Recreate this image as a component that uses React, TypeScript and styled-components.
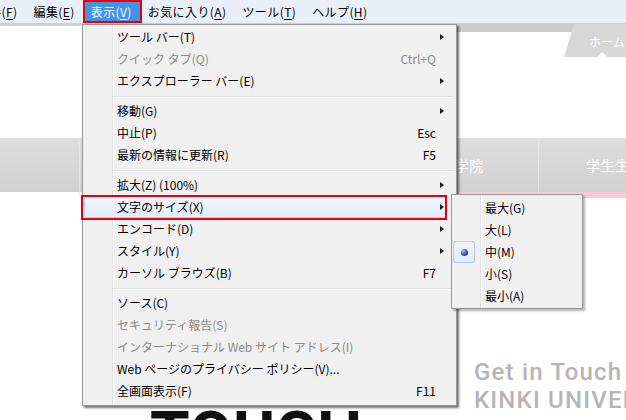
import React from 'react'
import styled, { createGlobalStyle, css } from 'styled-components'

type MenuEntry =
  | { label: string; shortcut?: string; sub?: boolean; disabled?: boolean; selected?: boolean }
  | 'sep'

const viewMenu: MenuEntry[] = [
  { label: 'ツール バー(T)', sub: true },
  { label: 'クイック タブ(Q)', shortcut: 'Ctrl+Q', disabled: true },
  { label: 'エクスプローラー バー(E)', sub: true },
  'sep',
  { label: '移動(G)', sub: true },
  { label: '中止(P)', shortcut: 'Esc' },
  { label: '最新の情報に更新(R)', shortcut: 'F5' },
  'sep',
  { label: '拡大(Z) (100%)', sub: true },
  { label: '文字のサイズ(X)', sub: true, selected: true },
  { label: 'エンコード(D)', sub: true },
  { label: 'スタイル(Y)', sub: true },
  { label: 'カーソル ブラウズ(B)', shortcut: 'F7' },
  'sep',
  { label: 'ソース(C)' },
  { label: 'セキュリティ報告(S)', disabled: true },
  { label: 'インターナショナル Web サイト アドレス(I)', disabled: true },
  { label: 'Web ページのプライバシー ポリシー(V)...' },
  { label: '全画面表示(F)', shortcut: 'F11' },
]

const sizes = ['最大(G)', '大(L)', '中(M)', '小(S)', '最小(A)']

const navItems = [
  { label: '入試情報' },
  { label: '学部' },
  { label: '大学院', accent: true },
  { label: '学生生活', accent: true },
]

const GlobalStyle = createGlobalStyle`
  html, body {
    margin: 0;
    padding: 0;
    background: #fff;
    overflow: hidden;
  }
  body {
    font-family: "Noto Sans CJK JP", "Noto Sans", sans-serif;
    font-size: 12px;
    color: #000;
  }
`

const Screen = styled.div`
  position: relative;
  width: 626px;
  height: 420px;
  overflow: hidden;
  background: #fff;
`

const MenuBar = styled.div`
  display: flex;
  height: 23px;
  background: #e9eff8;
  border-bottom: 1px solid #c9cfd8;
  white-space: nowrap;
`

const BarItem = styled.div<{ $active?: boolean }>`
  position: relative;
  padding: 0 8px;
  line-height: 23px;
  letter-spacing: 0.4px;
  color: ${p => (p.$active ? '#fff' : '#000')};
  background: ${p => (p.$active ? '#4393e4' : 'transparent')};

  &:first-child {
    margin-left: -56px;
  }

  u {
    text-decoration: underline;
    text-underline-offset: 2px;
  }

  ${p =>
    p.$active &&
    css`
      &::after {
        content: '';
        position: absolute;
        left: 0;
        right: -2px;
        top: 0;
        bottom: 0;
        border: 2.5px solid #e5000f;
      }
    `}
`

const HeaderRow = styled.div`
  display: flex;
  align-items: flex-start;
  height: 114px;
  margin-right: -18px;
`

const HeaderLine = styled.div`
  flex: 1;
  border-top: 2px solid #d3d3d3;
`

const HeaderStrip = styled.div`
  flex: 0 0 150px;
  height: 8px;
  background: #cbcbcb;
`

const HomeTab = styled.div`
  position: relative;
  flex: 0 0 80px;
  height: 33px;
  margin-left: -10px;
  padding: 2px 0 0 25px;
  box-sizing: border-box;
  display: flex;
  align-items: center;
  background: #d7d7d7;
  clip-path: polygon(10px 0, 100% 0, 100% 100%, 0 100%);
  color: #fff;
  font-size: 12px;

  &::after {
    content: '';
    position: absolute;
    left: 33px;
    bottom: 0;
    border-left: 5px solid transparent;
    border-right: 5px solid transparent;
    border-bottom: 5px solid #fff;
  }
`

const Nav = styled.nav`
  display: flex;
  align-items: flex-start;
  padding-left: 79px;
  background: linear-gradient(#dddddd, #d1d1d1) top left / 100% 54px no-repeat;
`

const NavItem = styled.div<{ $accent?: boolean }>`
  flex: 0 0 152px;
  height: 54px;
  display: flex;
  align-items: center;
  justify-content: center;
  border-left: 1px solid #e6e6e6;
  border-bottom: 6px solid ${p => (p.$accent ? '#f3cad5' : 'transparent')};
  color: #fff;
  font-size: 14px;
  letter-spacing: 0.5px;
`

const ContentRow = styled.div`
  display: flex;
`

const BigHeading = styled.div`
  flex: 0 0 474px;
  padding: 206px 0 0 150px;
  box-sizing: border-box;
  font-family: Roboto, "Liberation Sans", sans-serif;
  font-weight: 700;
  font-size: 64px;
  line-height: 64px;
  color: #111;
`

const Contact = styled.div`
  padding-top: 160px;
  font-family: Roboto, "Liberation Sans", sans-serif;
  font-weight: 500;
  font-size: 24px;
  line-height: 28px;
  letter-spacing: 1.2px;
  color: #b5b5b5;
  white-space: nowrap;
`

const panel = css`
  position: absolute;
  box-sizing: content-box;
  border: 1px solid #979797;
`

const Dropdown = styled.div`
  ${panel}
  left: 82px;
  top: 24px;
  width: 373px;
  padding: 1px 0 3px;
  background:
    linear-gradient(to right, transparent 29px, #e2e3e3 29px, #e2e3e3 30px, #fff 30px, #fff 31px, transparent 31px),
    #f0f0f0;
  box-shadow: 2px 2px 2px rgba(0, 0, 0, 0.55);
`

const Row = styled.div<{ $disabled?: boolean; $selected?: boolean }>`
  position: relative;
  display: grid;
  grid-template-columns: 1fr auto 20px;
  align-items: center;
  height: 22px;
  padding-left: 34px;
  line-height: 22px;
  white-space: nowrap;
  color: ${p => (p.$disabled ? '#8a8a8a' : '#000')};

  & > span {
    position: relative;
  }

  ${p =>
    p.$selected &&
    css`
      &::before {
        content: '';
        position: absolute;
        left: 1px;
        right: 10px;
        top: 0;
        bottom: 0;
        border: 1px solid #b9d3f1;
        border-radius: 2px;
        background: linear-gradient(#f2f7fd, #e2ebf7);
      }
      &::after {
        content: '';
        position: absolute;
        left: -2px;
        right: 9px;
        top: -1px;
        bottom: -2px;
        border: 2.5px solid #e5000f;
      }
    `}
`

const Shortcut = styled.span`
  text-align: right;
`

const Arrow = styled.span`
  justify-self: start;
  margin-left: 4px;
  width: 0;
  height: 0;
  border-left: 4px solid #1c1c1c;
  border-top: 3.5px solid transparent;
  border-bottom: 3.5px solid transparent;
`

const Separator = styled.div`
  height: 8px;
  box-sizing: border-box;
  padding-top: 4px;
  margin-left: 30px;
  margin-right: 2px;

  &::after {
    content: '';
    display: block;
    height: 1px;
    background: #e0e0e0;
    border-bottom: 1px solid #fff;
  }
`

const SubMenu = styled.div`
  ${panel}
  left: 451px;
  top: 194px;
  width: 130px;
  padding: 2px 0 1px;
  background:
    linear-gradient(to right, transparent 28px, #e2e3e3 28px, #e2e3e3 29px, #fff 29px, #fff 30px, transparent 30px),
    #f0f0f0;
  box-shadow: 2px 2px 2px rgba(0, 0, 0, 0.3);
`

const SubRow = styled.div`
  display: grid;
  grid-template-columns: 22px 1fr;
  column-gap: 10px;
  align-items: center;
  height: 22px;
  padding-left: 1px;
  line-height: 22px;
  white-space: nowrap;
`

const CheckCell = styled.span<{ $on?: boolean }>`
  display: flex;
  align-items: center;
  justify-content: center;
  height: 22px;
  box-sizing: border-box;
  border-radius: 2px;
  ${p =>
    p.$on &&
    css`
      border: 1px solid #aecdf2;
      background: linear-gradient(#eef5fd, #e0ebf8);
    `}
`

const RadioDot = styled.span`
  width: 7px;
  height: 7px;
  border-radius: 50%;
  background: radial-gradient(circle at 35% 30%, #b9c3f0 0, #4a56b8 45%, #1b2270 100%);
`

export default function App() {
  return (
    <Screen>
      <GlobalStyle />
      <MenuBar>
        <BarItem>ファイル(<u>F</u>)</BarItem>
        <BarItem>編集(<u>E</u>)</BarItem>
        <BarItem $active>表示(<u>V</u>)</BarItem>
        <BarItem>お気に入り(<u>A</u>)</BarItem>
        <BarItem>ツール(<u>T</u>)</BarItem>
        <BarItem>ヘルプ(<u>H</u>)</BarItem>
      </MenuBar>

      <HeaderRow>
        <HeaderLine />
        <HeaderStrip />
        <HomeTab>ホーム</HomeTab>
      </HeaderRow>

      <Nav>
        {navItems.map(n => (
          <NavItem key={n.label} $accent={n.accent}>
            {n.label}
          </NavItem>
        ))}
      </Nav>

      <ContentRow>
        <BigHeading>TOUCH</BigHeading>
        <Contact>
          <div>Get in Touch</div>
          <div>KINKI UNIVERSITY</div>
        </Contact>
      </ContentRow>

      <Dropdown>
        {viewMenu.map((item, i) =>
          item === 'sep' ? (
            <Separator key={i} />
          ) : (
            <Row key={i} $disabled={item.disabled} $selected={item.selected}>
              <span>{item.label}</span>
              <Shortcut>{item.shortcut}</Shortcut>
              {item.sub ? <Arrow /> : <span />}
            </Row>
          )
        )}
      </Dropdown>

      <SubMenu>
        {sizes.map(s => (
          <SubRow key={s}>
            <CheckCell $on={s === '中(M)'}>{s === '中(M)' && <RadioDot />}</CheckCell>
            <span>{s}</span>
          </SubRow>
        ))}
      </SubMenu>
    </Screen>
  )
}
